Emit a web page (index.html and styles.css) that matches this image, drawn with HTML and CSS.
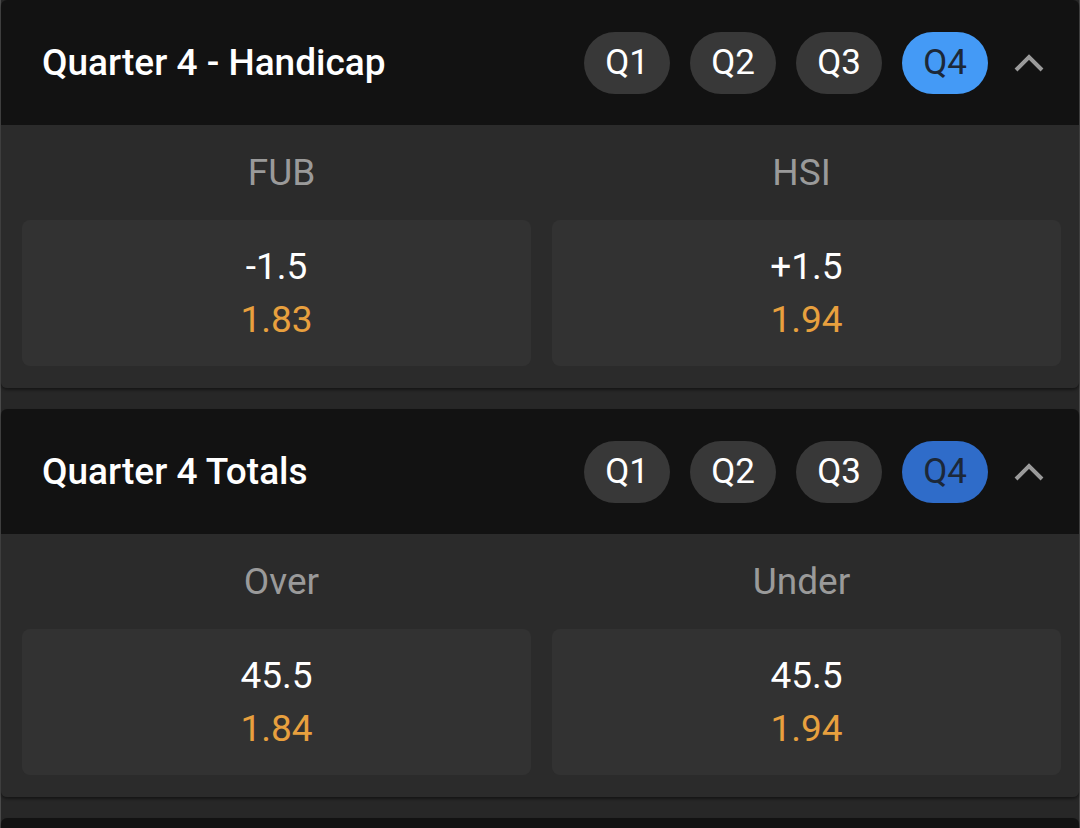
FILE: index.html
```html
<!DOCTYPE html>
<html>

<head>
  <meta charset="utf-8">
  <title>Quarter Markets</title>
  <link rel="stylesheet" href="styles.css">
</head>

<body>
  <div class="markets">

    <div class="market">
      <div class="market-header">
        <h2 class="market-title">Quarter 4 - Handicap</h2>
        <div class="quarters">
          <span class="quarter">Q1</span>
          <span class="quarter">Q2</span>
          <span class="quarter">Q3</span>
          <span class="quarter active">Q4</span>
          <!-- collapse toggle -->
          <svg class="chevron" width="30" height="18" viewBox="0 0 30 18">
            <path d="M2 16 L15 3 L28 16" fill="none" stroke="#9a9a9a" stroke-width="4" />
          </svg>
        </div>
      </div>
      <div class="market-body">
        <div class="outcome">
          <div class="outcome-label">FUB</div>
          <div class="odds-box">
            <span class="line">-1.5</span>
            <span class="price">1.83</span>
          </div>
        </div>
        <div class="outcome">
          <div class="outcome-label">HSI</div>
          <div class="odds-box">
            <span class="line">+1.5</span>
            <span class="price">1.94</span>
          </div>
        </div>
      </div>
    </div>

    <div class="market">
      <div class="market-header">
        <h2 class="market-title">Quarter 4 Totals</h2>
        <div class="quarters">
          <span class="quarter">Q1</span>
          <span class="quarter">Q2</span>
          <span class="quarter">Q3</span>
          <span class="quarter active dim">Q4</span>
          <svg class="chevron" width="30" height="18" viewBox="0 0 30 18">
            <path d="M2 16 L15 3 L28 16" fill="none" stroke="#9a9a9a" stroke-width="4" />
          </svg>
        </div>
      </div>
      <div class="market-body">
        <div class="outcome">
          <div class="outcome-label">Over</div>
          <div class="odds-box">
            <span class="line">45.5</span>
            <span class="price">1.84</span>
          </div>
        </div>
        <div class="outcome">
          <div class="outcome-label">Under</div>
          <div class="odds-box">
            <span class="line">45.5</span>
            <span class="price">1.94</span>
          </div>
        </div>
      </div>
    </div>

    <div class="market">
      <div class="market-header"></div>
    </div>

  </div>
</body>

</html>
```

FILE: styles.css
```css
body {
  margin: 0;
  background: #272727;
  font-family: Roboto, "Noto Sans", sans-serif;
  overflow: hidden;
}

.markets {
  border-left: 1px solid #4a4a4a;
  border-right: 1px solid #4a4a4a;
  min-height: 828px;
}

.market {
  margin-bottom: 21px;
  border-radius: 6px;
  overflow: hidden;
  box-shadow: 0 2px 3px rgba(0, 0, 0, 0.45);
}

.market-header {
  height: 125px;
  background: #121212;
  display: flex;
  align-items: center;
  justify-content: space-between;
  padding: 0 35px 0 41px;
}

.market-title {
  margin: 0;
  color: #fff;
  font-size: 37px;
  font-weight: 500;
}

.quarters {
  display: flex;
  align-items: center;
  gap: 20px;
}

.quarter {
  width: 86px;
  height: 62px;
  border-radius: 31px;
  background: #383838;
  color: #fff;
  font-size: 35px;
  display: flex;
  align-items: center;
  justify-content: center;
}

.quarter.active {
  background: #449af6;
  color: #1c2838;
}

.quarter.active.dim {
  background: #2f6cc9;
}

.chevron {
  margin-left: 6px;
}

.market-body {
  background: #2b2b2b;
  display: grid;
  grid-template-columns: 1fr 1fr;
  gap: 21px;
  padding: 0 18px 22px 21px;
}

.outcome-label {
  height: 95px;
  line-height: 95px;
  text-align: center;
  color: #9a9a9a;
  font-size: 37px;
}

.outcome:first-child .outcome-label {
  padding-left: 10px;
}

.outcome:last-child .outcome-label {
  padding-right: 10px;
}

.odds-box {
  height: 146px;
  background: #323232;
  border-radius: 8px;
  display: flex;
  flex-direction: column;
  align-items: center;
  justify-content: center;
  font-size: 37px;
  line-height: 53px;
}

.line {
  color: #fff;
}

.price {
  color: #e8a03e;
}
```
